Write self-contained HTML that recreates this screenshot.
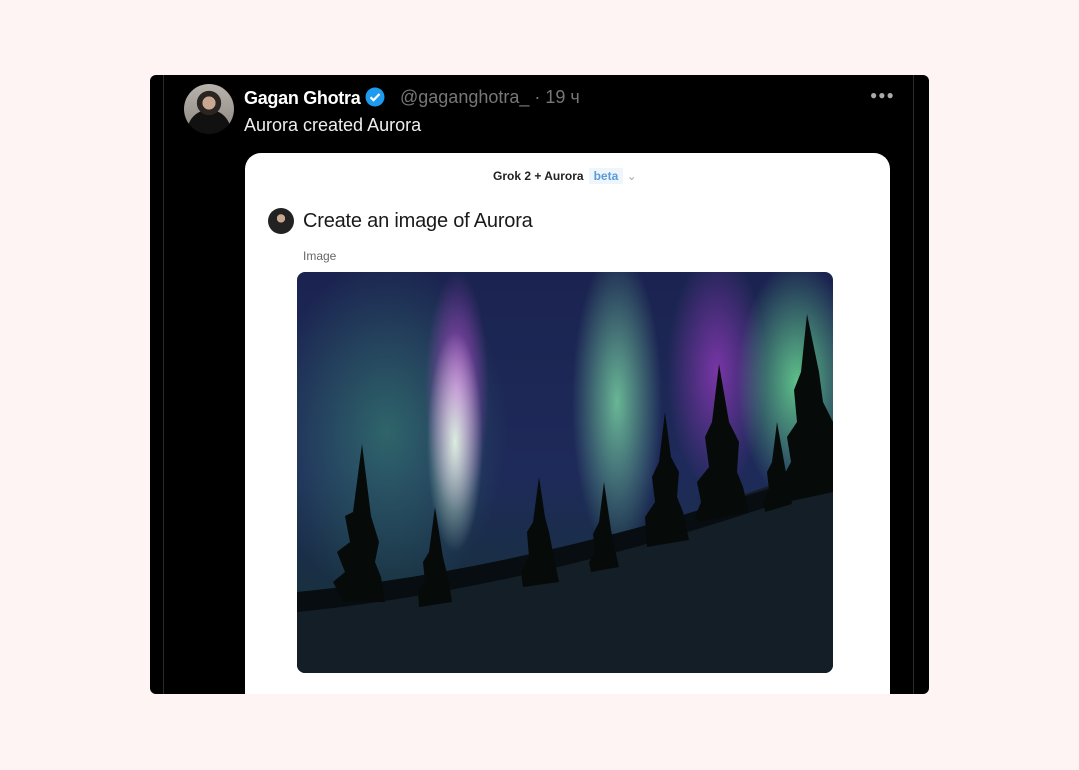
<!DOCTYPE html>
<html><head><meta charset="utf-8"><style>
body{margin:0;width:1079px;height:770px;background:#fff4f4;position:relative;overflow:hidden;font-family:"Liberation Sans",sans-serif}
.box{position:absolute;left:150px;top:75px;width:779px;height:619px;background:#000;border-radius:6px;overflow:hidden}
.vl{position:absolute;top:0;bottom:0;width:1px;background:#2a2a2a}
.av{position:absolute;left:34px;top:9px;width:50px;height:50px;border-radius:50%;background:radial-gradient(circle at 50% 38%,#c8a890 0 16%,#2b2522 17% 30%,transparent 31%),radial-gradient(circle at 50% 95%,#111 0 40%,transparent 41%),linear-gradient(#b9b3ad,#8d8680)}
.name{position:absolute;left:94px;top:12px;color:#fff;font-size:18px;font-weight:bold;letter-spacing:-.3px}
.handle{position:absolute;left:250px;top:12px;color:#777;font-size:18px}
.txt{position:absolute;left:94px;top:40px;color:#eee;font-size:18px}
.dots{position:absolute;left:720px;top:13px;color:#aaa;font-size:12px;letter-spacing:1px}
.card{position:absolute;left:95px;top:78px;width:645px;height:560px;background:#fff;border-radius:16px}
.grok{position:absolute;top:15px;left:248px;font-size:12px;font-weight:bold;color:#222}
.beta{display:inline-block;background:#eef5fb;color:#5a9bd8;padding:1px 5px;margin-left:5px;font-weight:bold}
.q{position:absolute;left:58px;top:57px;font-size:20px;color:#1a1a1a;letter-spacing:-.2px}
.qa{position:absolute;left:23px;top:55px;width:26px;height:26px;border-radius:50%;background:radial-gradient(circle at 50% 40%,#c8a890 0 20%,#222 21%)}
.im{position:absolute;left:58px;top:96px;font-size:12px;color:#666}
.pic{position:absolute;left:52px;top:119px;width:536px;height:401px;border-radius:8px;overflow:hidden;
background:
radial-gradient(ellipse 28px 110px at 158px 170px,rgba(230,255,230,.9),transparent),
radial-gradient(ellipse 40px 150px at 160px 120px,rgba(210,80,230,.8),transparent 80%),
radial-gradient(ellipse 45px 150px at 320px 130px,rgba(130,230,170,.75),transparent),
radial-gradient(ellipse 60px 120px at 500px 110px,rgba(110,230,150,.8),transparent),
radial-gradient(ellipse 50px 120px at 420px 100px,rgba(160,60,200,.7),transparent),
radial-gradient(ellipse 120px 170px at 90px 160px,rgba(60,150,120,.55),transparent),
linear-gradient(#1b2450,#1e2a5a 50%,#183040 80%,#0f1e26)}
</style></head><body>
<div class="box">
<div class="vl" style="left:13px"></div><div class="vl" style="left:763px"></div>
<div class="av"></div>
<div class="name">Gagan Ghotra <svg width="20" height="20" viewBox="0 0 20 20" style="vertical-align:-3px"><circle cx="10" cy="10" r="9.5" fill="#1d9bf0"/><path d="M5.5 10.2l3 3 6-6.2" stroke="#fff" stroke-width="2.2" fill="none"/></svg></div>
<div class="handle">@gaganghotra_ · 19 ч</div>
<div class="txt">Aurora created Aurora</div>
<div class="dots">●●●</div>
<div class="card">
<div class="grok">Grok 2 + Aurora<span class="beta">beta</span> <span style="color:#aaa;font-weight:normal">⌄</span></div>
<div class="qa"></div>
<div class="q">Create an image of Aurora</div>
<div class="im">Image</div>
<div class="pic"><svg width="536" height="401" style="position:absolute;left:0;top:0">
<path d="M0 330 Q250 300 536 190 L536 401 L0 401Z" fill="#141e26"/>
<path d="M0 320 Q250 295 536 195 L536 212 Q250 315 0 340Z" fill="#070d10"/>
<g fill="#060b0a">
<polygon points="65,172 56,240 48,244 53,270 40,280 48,300 36,310 46,330 88,330 84,305 78,290 82,270 74,244"/>
<polygon points="138,235 132,280 126,290 128,310 121,320 122,335 155,330 152,310 146,285"/>
<polygon points="242,205 236,250 230,260 232,285 224,300 226,315 262,310 258,290 252,260 248,245"/>
<polygon points="307,210 302,250 296,262 298,280 292,290 294,300 322,295 318,278 314,258"/>
<polygon points="368,140 362,190 355,205 358,230 348,245 350,275 392,268 386,240 380,225 382,200 374,185"/>
<polygon points="422,92 415,150 408,165 412,195 400,210 404,230 398,245 402,250 452,240 446,215 440,200 442,170 432,150"/>
<polygon points="480,150 475,190 470,200 472,218 466,228 468,240 495,232 492,215 488,195"/>
<polygon points="510,42 504,100 497,118 500,150 490,165 494,190 486,205 490,230 536,220 536,150 526,130 522,100"/>
</g></svg></div>
</div>
</div>
</body></html>
